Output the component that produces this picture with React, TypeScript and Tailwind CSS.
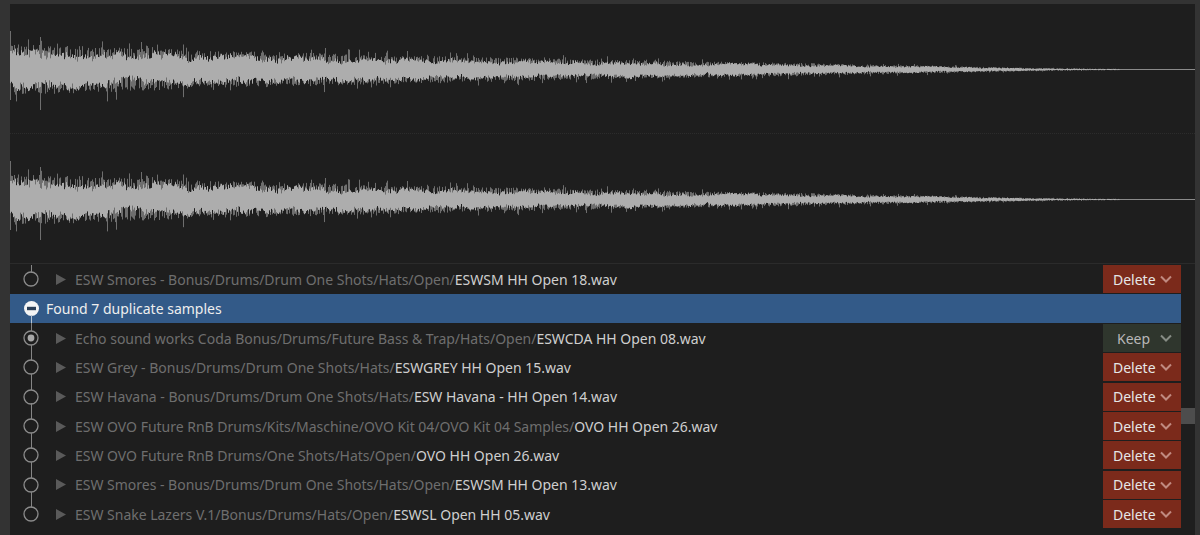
import React from "react";

type Row = { dir: string; file: string; action: "Delete" | "Keep"; selected?: boolean; up: boolean; down: boolean };

const rows: Row[] = [
  { dir: "Echo sound works Coda Bonus/Drums/Future Bass & Trap/Hats/Open/", file: "ESWCDA HH Open 08.wav", action: "Keep", selected: true, up: true, down: true },
  { dir: "ESW Grey - Bonus/Drums/Drum One Shots/Hats/", file: "ESWGREY HH Open 15.wav", action: "Delete", up: true, down: true },
  { dir: "ESW Havana - Bonus/Drums/Drum One Shots/Hats/", file: "ESW Havana - HH Open 14.wav", action: "Delete", up: true, down: true },
  { dir: "ESW OVO Future RnB Drums/Kits/Maschine/OVO Kit 04/OVO Kit 04 Samples/", file: "OVO HH Open 26.wav", action: "Delete", up: true, down: true },
  { dir: "ESW OVO Future RnB Drums/One Shots/Hats/Open/", file: "OVO HH Open 26.wav", action: "Delete", up: true, down: true },
  { dir: "ESW Smores - Bonus/Drums/Drum One Shots/Hats/Open/", file: "ESWSM HH Open 13.wav", action: "Delete", up: true, down: true },
  { dir: "ESW Snake Lazers V.1/Bonus/Drums/Hats/Open/", file: "ESWSL Open HH 05.wav", action: "Delete", up: true, down: false },
];

function envelope(x: number) {
  const pts: [number, number][] = [
    [0, 22], [60, 21], [100, 19.5], [200, 16.5], [300, 14.5], [400, 12], [500, 10.5], [600, 8.5], [700, 7],
    [800, 5.5], [880, 4], [935, 3], [1000, 1.8], [1050, 1], [1100, 0.6], [1125, 0.5], [1185, 0.5],
  ];
  for (let i = 1; i < pts.length; i++) {
    if (x <= pts[i][0]) {
      const [a, b] = pts[i - 1];
      const [c, d] = pts[i];
      return b + ((d - b) * (x - a)) / (c - a);
    }
  }
  return 0.5;
}

function rng(seed: number) {
  let s = seed;
  return () => {
    s = (s * 1664525 + 1013904223) % 4294967296;
    return s / 4294967296;
  };
}

function Wave() {
  const r = rng(1234);
  const w = 1185;
  const mid = 65.5;
  let core = "";
  let soft = "";
  let walkT = 0;
  let walkB = 0;
  for (let x = 0; x < 1110; x++) {
    const e = envelope(x);
    walkT = walkT * 0.9 + (r() - 0.5) * 0.16;
    walkB = walkB * 0.9 + (r() - 0.5) * 0.16;
    const t = e * (0.72 + walkT + (r() - 0.5) * 0.34);
    const b = e * (0.72 + walkB + (r() - 0.5) * 0.34);
    core += `M${x + 0.5} ${(mid - t).toFixed(1)}V${(mid + b).toFixed(1)}`;
    if (r() < 0.5) {
      soft += `M${x + 0.5} ${(mid - e * (0.85 + r() * 0.3)).toFixed(1)}V${mid}`;
    }
    if (r() < 0.5) {
      soft += `M${x + 0.5} ${mid}V${(mid + e * (0.85 + r() * 0.3)).toFixed(1)}`;
    }
    if (r() < 0.04) {
      soft += `M${x + 0.5} ${(mid - e * (1.15 + r() * 0.4)).toFixed(1)}V${mid}`;
    }
    if (r() < 0.04) {
      soft += `M${x + 0.5} ${mid}V${(mid + e * (1.15 + r() * 0.55)).toFixed(1)}`;
    }
  }
  soft += `M0.5 27V96M30.5 33V106`;
  return (
    <svg width={w} height={130} viewBox={`0 0 ${w} 130`} className="block">
      <path d={soft} stroke="#6e6e6e" strokeWidth={1} fill="none" />
      <path d={core} stroke="#adadad" strokeWidth={1} fill="none" />
      <path d={`M1110 ${mid}H${w}`} stroke="#8a8a8a" strokeWidth={1} fill="none" />
    </svg>
  );
}

function Node({ selected, up, down }: { selected?: boolean; up: boolean; down: boolean }) {
  return (
    <div className="relative flex h-full w-[46px] shrink-0 items-center justify-center pr-[4px]">
      {up && <div className="absolute left-[20.5px] top-0 h-[8px] w-[1.5px] bg-[#858585]" />}
      {down && <div className="absolute bottom-0 left-[20.5px] h-[8px] w-[1.5px] bg-[#858585]" />}
      <svg width="16" height="16" viewBox="0 0 16 16" className="ml-[-1px]">
        <circle cx="8" cy="8" r="7" fill="none" stroke="#8c8c8c" strokeWidth="1.3" />
        {selected && <circle cx="8" cy="8" r="3.4" fill="#a8a8a8" />}
      </svg>
    </div>
  );
}

function Action({ kind }: { kind: "Delete" | "Keep" }) {
  const del = kind === "Delete";
  return (
    <div
      className={`mr-[14px] flex h-[28px] w-[78px] shrink-0 items-center pl-[10px] text-[14px] ${
        del ? "bg-[#7b2a1b] text-[#e6e6e6]" : "bg-[#2f362d] text-[#b8b8b8]"
      }`}
    >
      <span className={del ? "" : "pl-[4px]"}>{kind}</span>
      <svg width="12" height="8" viewBox="0 0 12 8" className="ml-auto mr-[9px]">
        <path d="M1 1.5 6 6.5 11 1.5" fill="none" stroke={del ? "#c08a80" : "#868c84"} strokeWidth="2" />
      </svg>
    </div>
  );
}

function FileRow({ row }: { row: Row }) {
  return (
    <div className="flex h-[29.35px] items-center">
      <Node selected={row.selected} up={row.up} down={row.down} />
      <svg width="10" height="11" viewBox="0 0 10 11" className="shrink-0">
        <path d="M0 0 10 5.5 0 11Z" fill="#5a5a5a" />
      </svg>
      <div className="ml-[9px] min-w-0 flex-1 truncate text-[14px] tracking-[-0.001em] text-[#6e6e6e]">
        {row.dir}
        <span className="text-[#cfcfcf]">{row.file}</span>
      </div>
      <Action kind={row.action} />
    </div>
  );
}

export default function App() {
  return (
    <div
      className="flex h-[535px] w-[1200px] overflow-hidden bg-[#333333] pt-[4px]"
      style={{ fontFamily: '"Noto Sans", "Open Sans", sans-serif' }}
    >
      <div className="w-[10px] shrink-0" />
      <div className="relative flex h-full w-[1185px] shrink-0 flex-col bg-[#1e1e1e]">
        <div className="h-[130px] shrink-0 border-b border-dotted border-[#2c2c2c]">
          <Wave />
        </div>
        <div className="h-[130px] shrink-0 border-b border-[#2b2b2b]">
          <Wave />
        </div>
        <div className="flex flex-col pt-[0.75px]">
          <FileRow
            row={{ dir: "ESW Smores - Bonus/Drums/Drum One Shots/Hats/Open/", file: "ESWSM HH Open 18.wav", action: "Delete", up: true, down: false }}
          />
          <div className="relative mr-[14px] flex h-[29.35px] items-center bg-[#335a88] pl-[13.5px] text-[14px] text-[#eeeeee]">
            <div className="absolute bottom-0 left-[20.5px] h-[8px] w-[1.5px] bg-[#b6c3d2]" />
            <svg width="15" height="15" viewBox="0 0 15 15" className="shrink-0">
              <circle cx="7.5" cy="7.5" r="7.5" fill="#f4f4f4" />
              <rect x="3" y="5.8" width="9" height="3.4" fill="#2b3f57" />
            </svg>
            <span className="ml-[7.5px]">Found 7 duplicate samples</span>
          </div>
          {rows.map((row, i) => (
            <FileRow key={i} row={row} />
          ))}
        </div>
        <div className="absolute right-0 top-[404px] h-[16px] w-[14px] bg-[#4d4d4d]" />
      </div>
      <div className="flex-1" />
    </div>
  );
}
